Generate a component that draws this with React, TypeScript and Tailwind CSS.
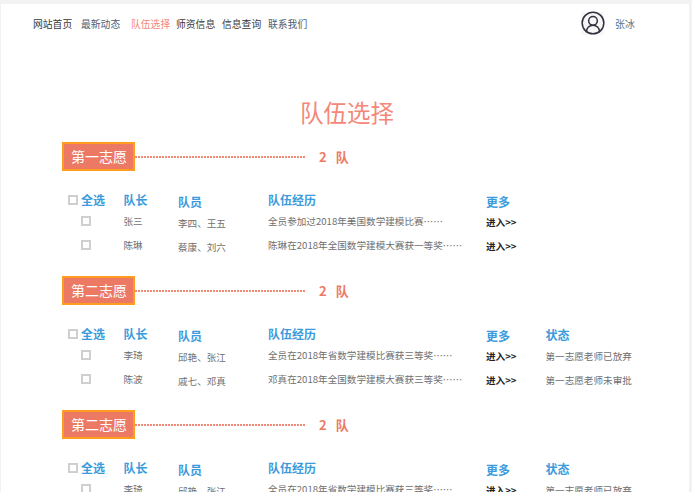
import { CircleUserRound } from 'lucide-react';

interface Team {
  leader: string;
  members: string;
  history: string;
  status?: string;
}

interface Section {
  label: string;
  teams: Team[];
  gapClass: string;
  showStatus: boolean;
}

const sections: Section[] = [
  {
    label: '第一志愿',
    showStatus: false,
    gapClass: 'mb-[15px]',
    teams: [
      { leader: '张三', members: '李四、王五', history: '全员参加过2018年美国数学建模比赛……' },
      { leader: '陈琳', members: '蔡康、刘六', history: '陈琳在2018年全国数学建模大赛获一等奖……' },
    ],
  },
  {
    label: '第二志愿',
    showStatus: true,
    gapClass: 'mb-[15px]',
    teams: [
      { leader: '李琦', members: '邱艳、张江', history: '全员在2018年省数学建模比赛获三等奖……', status: '第一志愿老师已放弃' },
      { leader: '陈波', members: '戚七、邓真', history: '邓真在2018年全国数学建模大赛获三等奖……', status: '第一志愿老师未审批' },
    ],
  },
  {
    label: '第二志愿',
    showStatus: true,
    gapClass: 'mb-0',
    teams: [
      { leader: '李琦', members: '邱艳、张江', history: '全员在2018年省数学建模比赛获三等奖……', status: '第一志愿老师已放弃' },
    ],
  },
];

const navItems = [
  { text: '网站首页', className: 'text-[#3a3a3a]' },
  { text: '最新动态', className: 'ml-[8px] text-[#4c6176]' },
  { text: '队伍选择', className: 'ml-[10px] text-[#f4877a]' },
  { text: '师资信息', className: 'ml-[5px] text-[#3a3a3a]' },
  { text: '信息查询', className: 'ml-[6px] text-[#3a3a3a]' },
  { text: '联系我们', className: 'ml-[6px] text-[#4c6176]' },
];

const TableHead = ({ showStatus }: { showStatus: boolean }) => (
  <div className="flex h-[21px] items-start text-[12px] font-bold leading-[16px] text-[#3b9bdc]">
    <div className="flex w-[55.5px] items-center">
      <span className="mr-[3px] size-[10px] border-2 border-[#cfcfcf]" />
      全选
    </div>
    <div className="w-[54.5px]">队长</div>
    <div className="w-[90px] pt-[2px]">队员</div>
    <div className="w-[218px]">队伍经历</div>
    <div className="w-[59.5px] pt-[2px]">更多</div>
    {showStatus && <div className="pt-[1px]">状态</div>}
  </div>
);

const TeamRow = ({ team }: { team: Team }) => (
  <div className="flex h-[24px] items-start text-[9.6px] leading-[14px] text-[#707070]">
    <div className="w-[55.5px] pl-[13px] pt-[3px]">
      <span className="block size-[10px] border-2 border-[#cfcfcf]" />
    </div>
    <div className="w-[54.5px] pt-px">{team.leader}</div>
    <div className="w-[90px] pt-[3px]">{team.members}</div>
    <div className="w-[218px] pt-[1px]">{team.history}</div>
    <div className="w-[59.5px] pt-[2px] font-bold text-[#222222]">进入&gt;&gt;</div>
    {team.status && <div className="pt-[2px]">{team.status}</div>}
  </div>
);

export default function App() {
  return (
    <div
      className="h-[492px] w-[692px] overflow-hidden bg-[#f2f2f2] pl-px pr-[3px] pt-[4px]"
      style={{ fontFamily: '"Noto Sans CJK SC", "Noto Sans", sans-serif' }}
    >
      <div className="h-full bg-white">
        <header className="flex h-[36px] items-center pl-[32px] pt-[6px]">
          <nav className="flex -translate-y-px text-[9.8px] leading-[14px]">
            {navItems.map((item) => (
              <a key={item.text} className={`w-[40px] ${item.className}`}>
                {item.text}
              </a>
            ))}
          </nav>
          <div className="ml-[273px] flex -translate-y-[2px] items-center">
            <span className="flex size-[23px] items-center justify-center bg-[#f7f7f7]">
              <CircleUserRound size={26} strokeWidth={1.4} className="shrink-0 text-[#33333f]" />
            </span>
            <span className="ml-[11px] text-[10px] text-[#5d7080]">张冰</span>
          </div>
        </header>

        <h1 className="mt-[56px] h-[46px] pl-[299px] text-[23.5px] leading-[32px] text-[#f4877a]">队伍选择</h1>

        <main className="pl-[61px]">
          {sections.map((section, i) => (
            <section key={i} className={section.gapClass}>
              <div className="flex h-[29px] items-center">
                <div className="flex h-[29px] w-[73px] items-center justify-center border-2 border-[#ff9d1e] bg-[#ec7964] pl-px text-[14px] text-white">
                  {section.label}
                </div>
                <div className="h-[2px] w-[171px] bg-[repeating-linear-gradient(90deg,#f28a7a_0_2px,transparent_2px_3px)]" />
                <div className="ml-[13px] flex gap-[9px] text-[13px] font-bold text-[#ee7a66]">
                  <span>2</span>
                  <span>队</span>
                </div>
              </div>
              <div className="mt-[21px] pl-[6px]">
                <TableHead showStatus={section.showStatus} />
                {section.teams.map((team) => (
                  <TeamRow key={team.leader} team={team} />
                ))}
              </div>
            </section>
          ))}
        </main>
      </div>
    </div>
  );
}
